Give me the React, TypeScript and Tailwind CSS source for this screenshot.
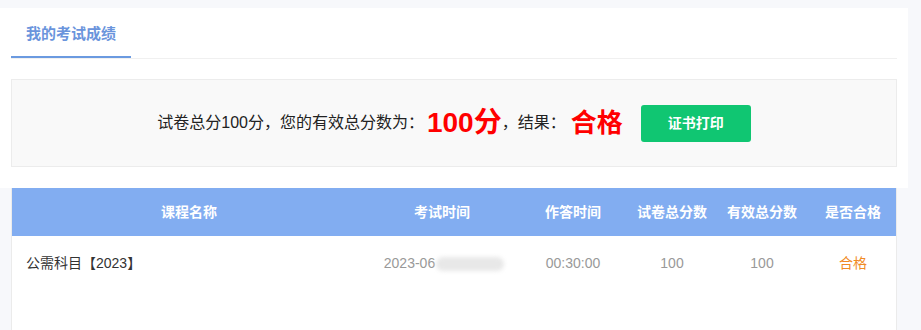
const font = "font-['Liberation_Sans','Noto_Sans_CJK_SC',sans-serif]";

const columns = ["课程名称", "考试时间", "作答时间", "试卷总分数", "有效总分数", "是否合格"];

export default function App() {
  return (
    <div className={`${font} min-h-[330px] bg-[#f7f8fb] pt-2`}>
      <section className="w-[908px] bg-white px-[11px] pt-[15px] pb-[21px]">
        <div className="flex border-b border-[#f0f0f0]">
          <div className="w-[120px] border-b-2 border-[#6b9ae0] pb-[11px] text-center text-[15px] font-bold leading-[22px] text-[#6a94dc]">
            我的考试成绩
          </div>
        </div>
        <div className="mt-5 flex h-[88px] items-center justify-center border border-[#ececec] bg-[#f9f9f9]">
          <span className="text-[16px] text-[#222]">试卷总分100分，您的有效总分数为：</span>
          <span className="ml-[3px] text-[28px] font-bold text-[#ff0000]">100分</span>
          <span className="text-[16px] text-[#222]">，结果：</span>
          <span className="ml-[5px] text-[26px] font-bold text-[#ff0000]">合格</span>
          <button className="ml-[18px] h-[37px] w-[110px] rounded-[3px] bg-[#10c672] text-[14px] font-bold text-white">
            证书打印
          </button>
        </div>
      </section>
      <div className="ml-[11px] w-[886px] border-x border-[#ebebeb] bg-white">
        <div className="grid h-12 grid-cols-[354px_152px_110px_88px_92px_90px] items-center bg-[#82adf1] text-center text-[14px] font-bold text-white">
          {columns.map((c) => (
            <div key={c}>{c}</div>
          ))}
        </div>
        <div className="grid h-[54px] grid-cols-[354px_152px_110px_88px_92px_90px] items-center text-center text-[14px] text-[#999]">
          <div className="pl-[14px] text-left text-[#333]">公需科目【2023】</div>
          <div className="pl-[4px]">
            2023-06
            <span className="ml-px inline-block h-[14px] w-[68px] rounded-full bg-[#e8e8e8] align-middle blur-[2px]" />
          </div>
          <div>00:30:00</div>
          <div>100</div>
          <div>100</div>
          <div className="text-[#f08a24]">合格</div>
        </div>
        <div className="h-[40px]" />
      </div>
    </div>
  );
}
